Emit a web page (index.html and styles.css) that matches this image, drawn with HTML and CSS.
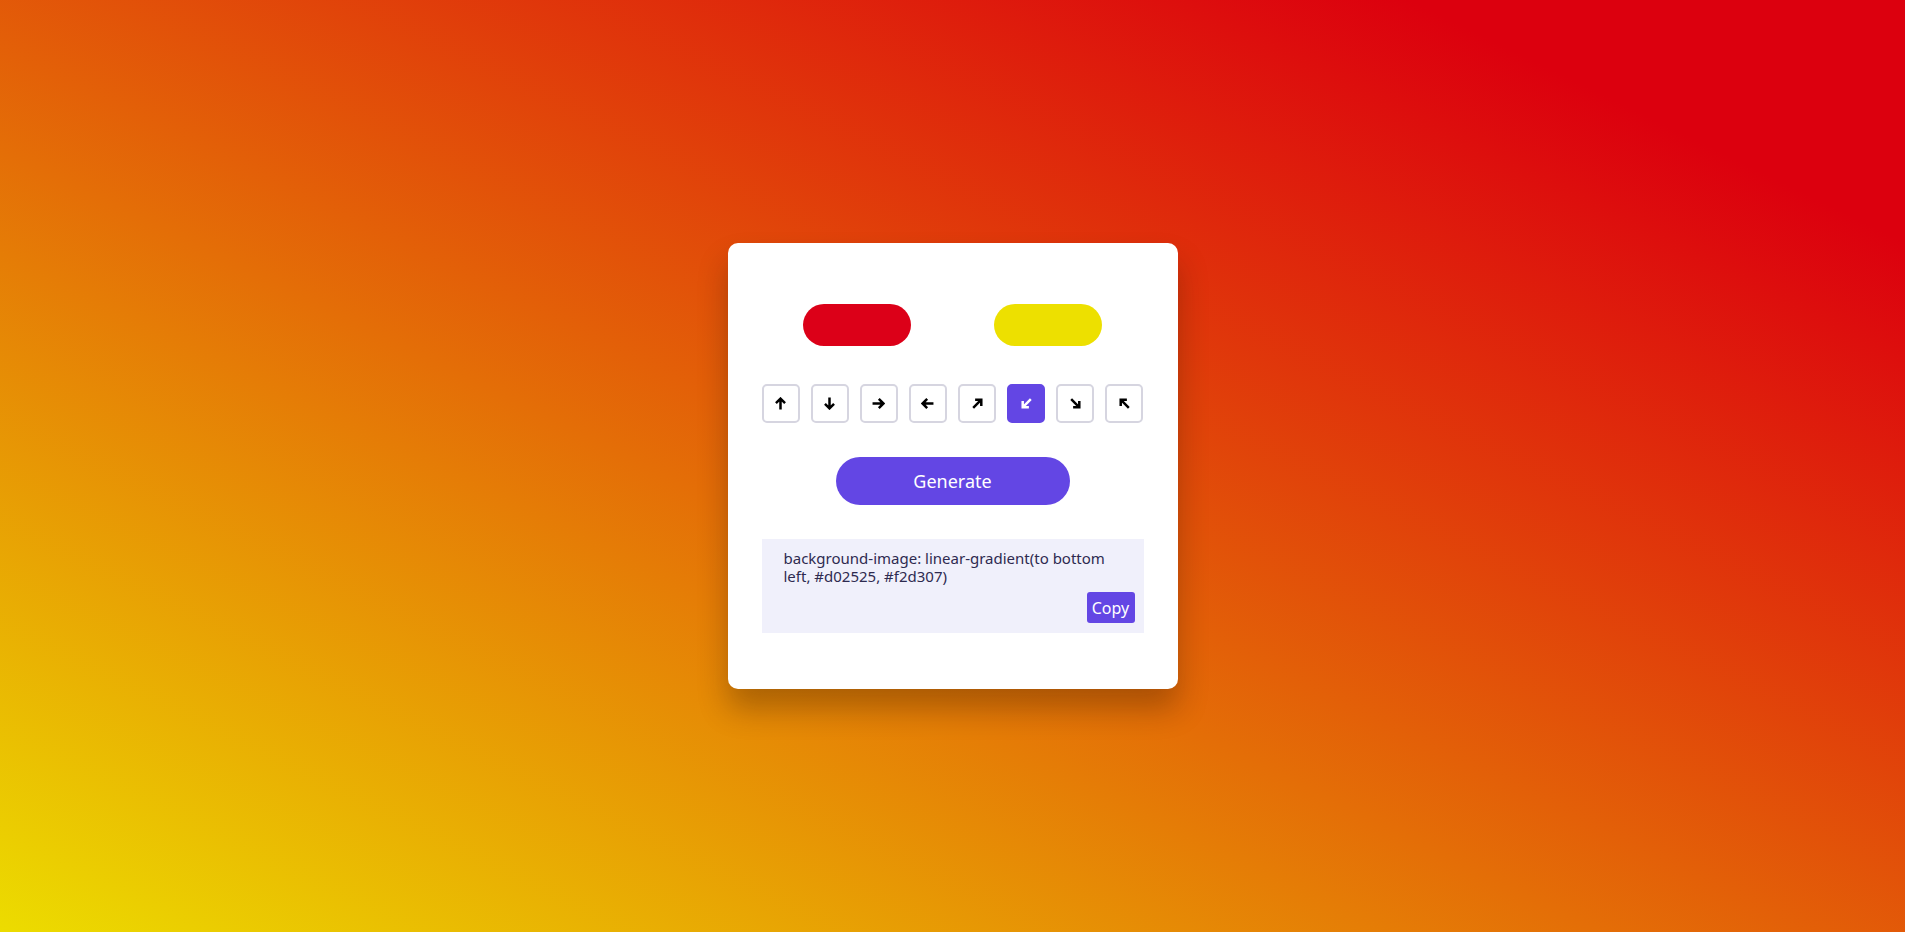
FILE: index.html
```html
<!DOCTYPE html>
<html lang="en">
<head>
<meta charset="utf-8">
<title>Gradient Generator</title>
<link rel="stylesheet" href="styles.css">
</head>
<body>
<div class="card">
  <div class="colors">
    <div class="swatch swatch-red"></div>
    <div class="swatch swatch-yellow"></div>
  </div>
  <div class="directions">
    <button class="dir"><svg viewBox="0 0 12 12"><path d="M6 11.5V1.5M1.8 5.7L6 1.5l4.2 4.2"/></svg></button>
    <button class="dir"><svg viewBox="0 0 12 12"><path d="M6 0.5v10M1.8 6.3L6 10.5l4.2-4.2"/></svg></button>
    <button class="dir"><svg viewBox="0 0 12 12"><path d="M0.5 6h10M6.3 1.8L10.5 6l-4.2 4.2"/></svg></button>
    <button class="dir"><svg viewBox="0 0 12 12"><path d="M11.5 6h-10M5.7 1.8L1.5 6l4.2 4.2"/></svg></button>
    <button class="dir"><svg viewBox="0 0 12 12"><path d="M2 10L9.5 2.5M3.8 2.5h5.7v5.7"/></svg></button>
    <button class="dir active"><svg viewBox="0 0 12 12"><path d="M10 2L2.5 9.5M2.5 3.8v5.7h5.7"/></svg></button>
    <button class="dir"><svg viewBox="0 0 12 12"><path d="M2 2l7.5 7.5M9.5 3.8v5.7H3.8"/></svg></button>
    <button class="dir"><svg viewBox="0 0 12 12"><path d="M10 10L2.5 2.5M8.2 2.5H2.5v5.7"/></svg></button>
  </div>
  <button class="generate">Generate</button>
  <div class="code">
    <p class="code-text">background-image: linear-gradient(to bottom left, #d02525, #f2d307)</p>
    <div class="code-actions"><button class="copy">Copy</button></div>
  </div>
</div>
</body>
</html>
```

FILE: styles.css
```css
* { box-sizing: border-box; }
html, body { margin: 0; height: 100%; }
body {
  font-family: "Noto Sans", "Open Sans", sans-serif;
  background-image: linear-gradient(to bottom left, #dc000e 13%, 58%, #ecdc00);
  display: flex;
  align-items: center;
  justify-content: center;
  min-height: 932px;
}
.card {
  width: 450px;
  height: 446px;
  background: #ffffff;
  border-radius: 10px;
  padding: 34px;
  box-shadow: 0 20px 30px rgba(40, 20, 0, 0.3);
}
.colors {
  display: flex;
  justify-content: space-around;
  margin-top: 27px;
}
.swatch {
  width: 108px;
  height: 42px;
  border-radius: 21px;
}
.swatch-red { background: #dc0018; }
.swatch-yellow { background: #ede000; }
.directions {
  display: flex;
  justify-content: space-between;
  margin-top: 38px;
}
.dir {
  width: 38px;
  height: 39px;
  padding: 0;
  border: 2px solid #d6d5e0;
  border-radius: 5px;
  background: #ffffff;
  display: flex;
  align-items: center;
  justify-content: center;
}
.dir svg {
  width: 13px;
  height: 13px;
  fill: none;
  stroke: #000000;
  stroke-width: 2.3;
}
.dir.active {
  background: #6346e4;
  border-color: #6346e4;
}
.dir.active svg { stroke: #ffffff; }
.generate {
  display: block;
  margin: 34px auto 0;
  width: 234px;
  height: 48px;
  border: none;
  border-radius: 24px;
  background: #6346e4;
  color: #ffffff;
  font-family: inherit;
  font-size: 18px;
}
.code {
  margin-top: 34px;
  height: 94px;
  background: #f0f0fb;
  padding: 10px 9px 11px 22px;
}
.code-text {
  margin: 0;
  font-size: 15px;
  line-height: 18px;
  color: #2e2a50;
}
.code-actions {
  display: flex;
  justify-content: flex-end;
  margin-top: 7px;
}
.copy {
  width: 48px;
  height: 31px;
  padding: 0;
  border: none;
  border-radius: 3px;
  background: #6346e4;
  color: #ffffff;
  font-family: inherit;
  font-size: 16px;
}
```
